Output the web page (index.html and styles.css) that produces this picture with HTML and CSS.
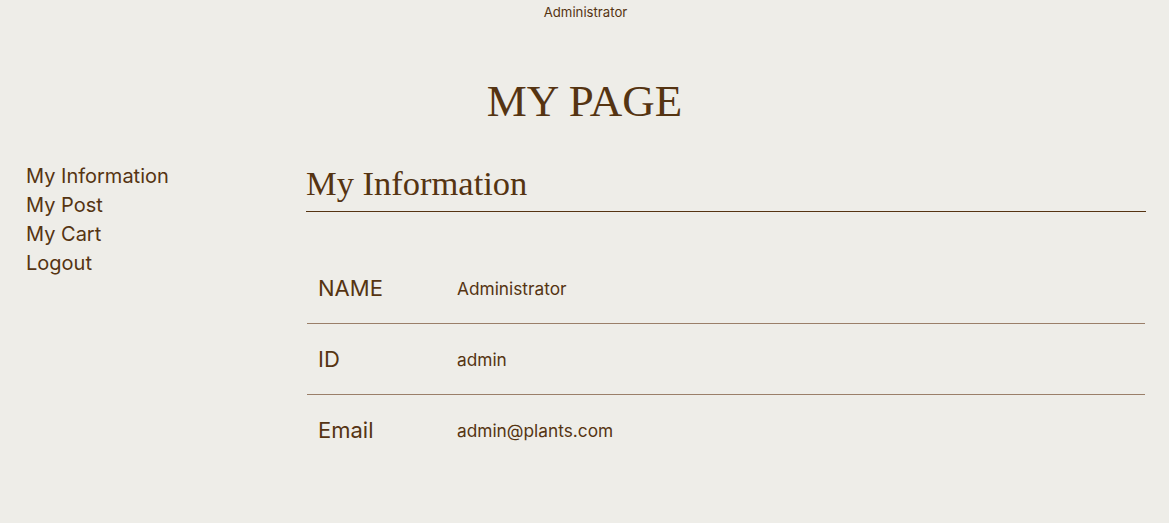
FILE: index.html
```html
<!DOCTYPE html>
<html lang="en">
<head>
<meta charset="utf-8">
<title>My Page</title>
<link rel="stylesheet" href="styles.css">
</head>
<body>
<header class="topbar">Administrator</header>
<h1 class="page-title">MY PAGE</h1>
<div class="layout">
  <nav class="sidebar">
    <a href="#">My Information</a>
    <a href="#">My Post</a>
    <a href="#">My Cart</a>
    <a href="#">Logout</a>
  </nav>
  <main class="content">
    <h2 class="section-title">My Information</h2>
    <div class="info">
      <div class="row"><span class="label">NAME</span><span class="value">Administrator</span></div>
      <div class="row"><span class="label">ID</span><span class="value">admin</span></div>
      <div class="row"><span class="label">Email</span><span class="value">admin@plants.com</span></div>
    </div>
  </main>
</div>
</body>
</html>
```
FILE: styles.css
```css
html, body {
  margin: 0;
  padding: 0;
  background: #eeede8;
  color: #553412;
  font-family: Inter, "Noto Sans", sans-serif;
}
.topbar {
  height: 25px;
  line-height: 25px;
  text-align: center;
  font-size: 13.2px;
  color: #553412;
  padding-left: 2px;
}
.page-title {
  margin: 51px 0 0;
  height: 50px;
  line-height: 50px;
  text-align: center;
  font-family: "Liberation Serif", serif;
  font-weight: normal;
  font-size: 45px;
  color: #553412;
}
.layout {
  display: grid;
  grid-template-columns: 280px 1fr;
  padding: 36px 23px 0 26px;
}
.sidebar {
  display: flex;
  flex-direction: column;
}
.sidebar a {
  color: #553412;
  text-decoration: none;
  font-size: 20px;
  line-height: 29px;
}
.section-title {
  margin: 0;
  font-family: "Liberation Serif", serif;
  font-weight: normal;
  font-size: 34.5px;
  line-height: 43px;
  padding-bottom: 6px;
  border-bottom: 1px solid #553412;
}
.info {
  margin: 41px 1px 0;
}
.row {
  display: flex;
  align-items: center;
  height: 70px;
  padding-left: 11px;
}
.row + .row {
  border-top: 1px solid #9a7f69;
}
.label {
  width: 139px;
  font-size: 22px;
}
.value {
  font-size: 17.3px;
}
```
